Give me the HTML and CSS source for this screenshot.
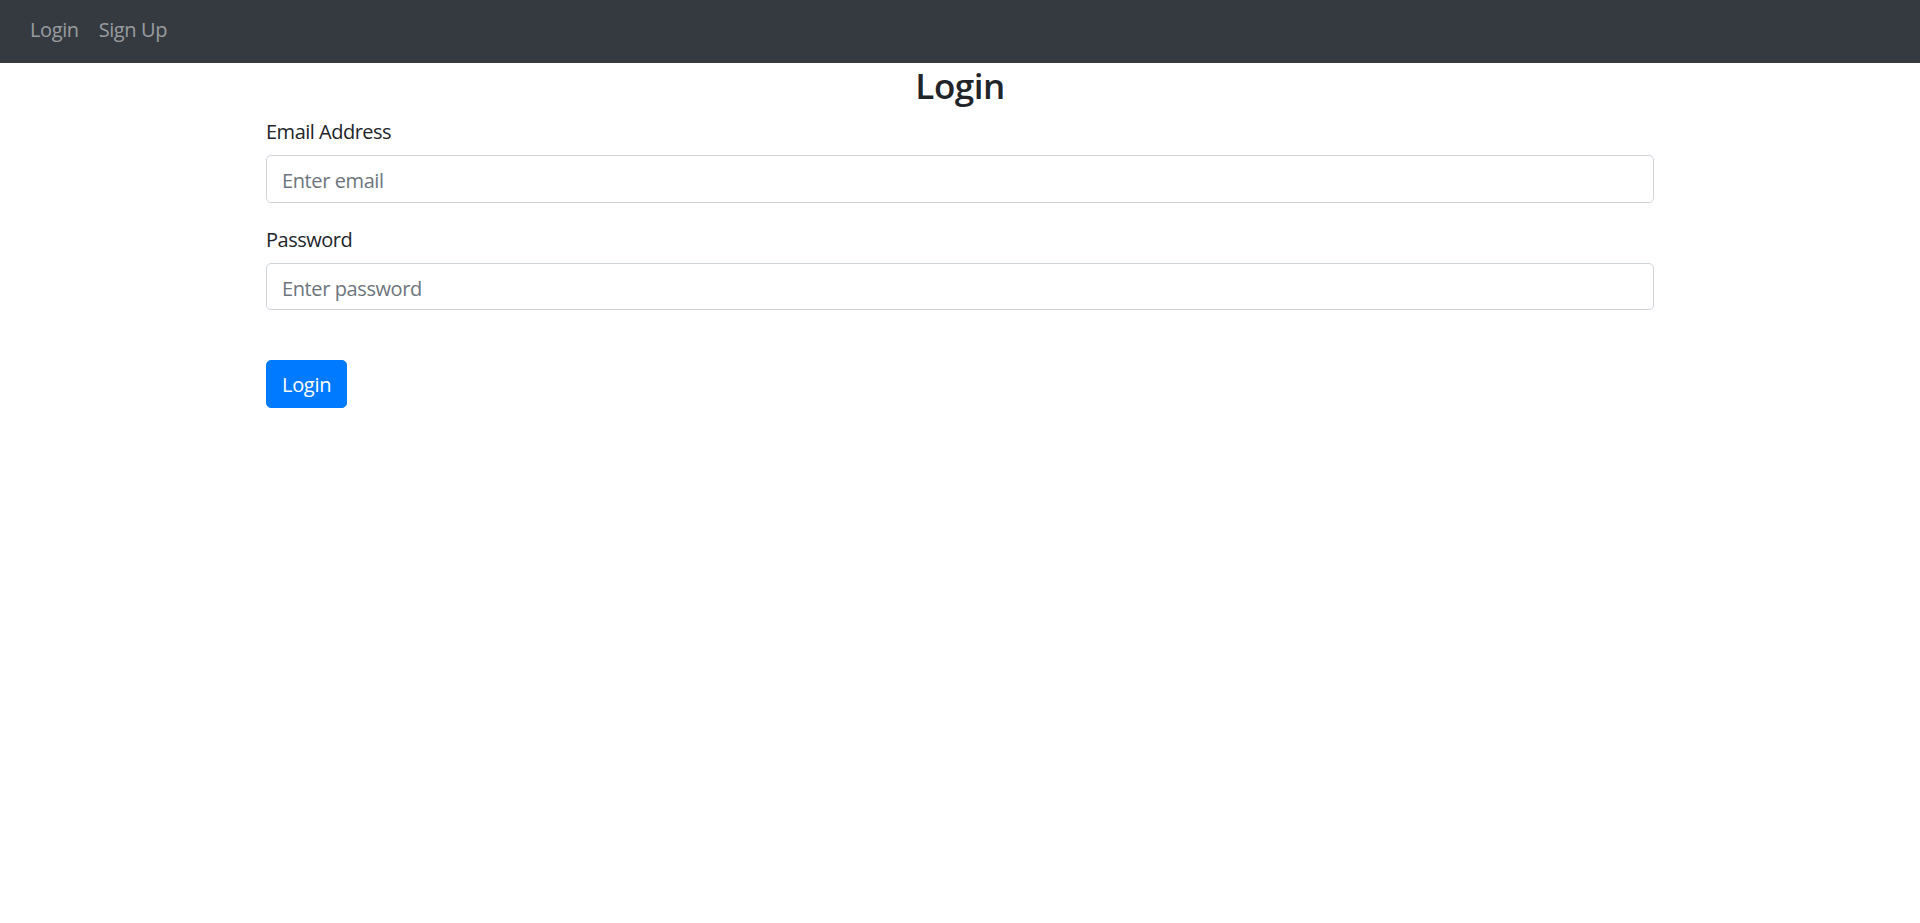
FILE: index.html
```html
<!DOCTYPE html>
<html lang="en">
<head>
<meta charset="utf-8">
<title>Login</title>
<link rel="stylesheet" href="styles.css">
</head>
<body>
<nav class="navbar">
  <a class="nav-link" href="#">Login</a>
  <a class="nav-link" href="#">Sign Up</a>
</nav>
<main class="container">
  <h3 class="title">Login</h3>
  <form class="form">
    <div class="form-group">
      <label class="label" for="email">Email Address</label>
      <input class="input" id="email" type="email" placeholder="Enter email">
    </div>
    <div class="form-group">
      <label class="label" for="password">Password</label>
      <input class="input" id="password" type="password" placeholder="Enter password">
    </div>
    <button class="btn" type="button">Login</button>
  </form>
</main>
</body>
</html>
```
FILE: styles.css
```css
* { box-sizing: border-box; }
html, body { margin: 0; padding: 0; }
body {
  font-family: "Segoe UI", "Open Sans", "Noto Sans", sans-serif;
  font-size: 20px;
  line-height: 30px;
  color: #212529;
  background: #fff;
}
.navbar {
  display: flex;
  align-items: flex-start;
  height: 63px;
  padding: 14.5px 20px 0;
  background: #343a40;
}
.nav-link {
  display: block;
  padding: 0 10px;
  color: rgba(255, 255, 255, 0.5);
  text-decoration: none;
  letter-spacing: -0.4px;
}
.container {
  width: 1388px;
  margin: 0 auto;
}
.title {
  margin: 0 0 8.5px;
  padding-top: 1.5px;
  text-align: center;
  font-size: 35px;
  line-height: 42px;
  font-weight: 600;
  letter-spacing: -0.5px;
}
.form-group { margin-bottom: 20px; }
.label {
  display: block;
  padding-top: 2px;
  margin-bottom: 8px;
  letter-spacing: -0.5px;
}
.input {
  display: block;
  width: 100%;
  height: 47.5px;
  padding: 9.5px 15px 5.5px;
  font: inherit;
  color: #495057;
  background: #fff;
  border: 1.25px solid #ced4da;
  border-radius: 5px;
  outline: none;
}
.input::placeholder { color: #6c757d; opacity: 1; letter-spacing: -0.4px; }
.btn {
  display: inline-block;
  margin-top: 30px;
  height: 47.5px;
  padding: 8.5px 15px 6.5px;
  font: inherit;
  letter-spacing: -0.3px;
  color: #fff;
  background: #007bff;
  border: 1.25px solid #007bff;
  border-radius: 5px;
}
```
